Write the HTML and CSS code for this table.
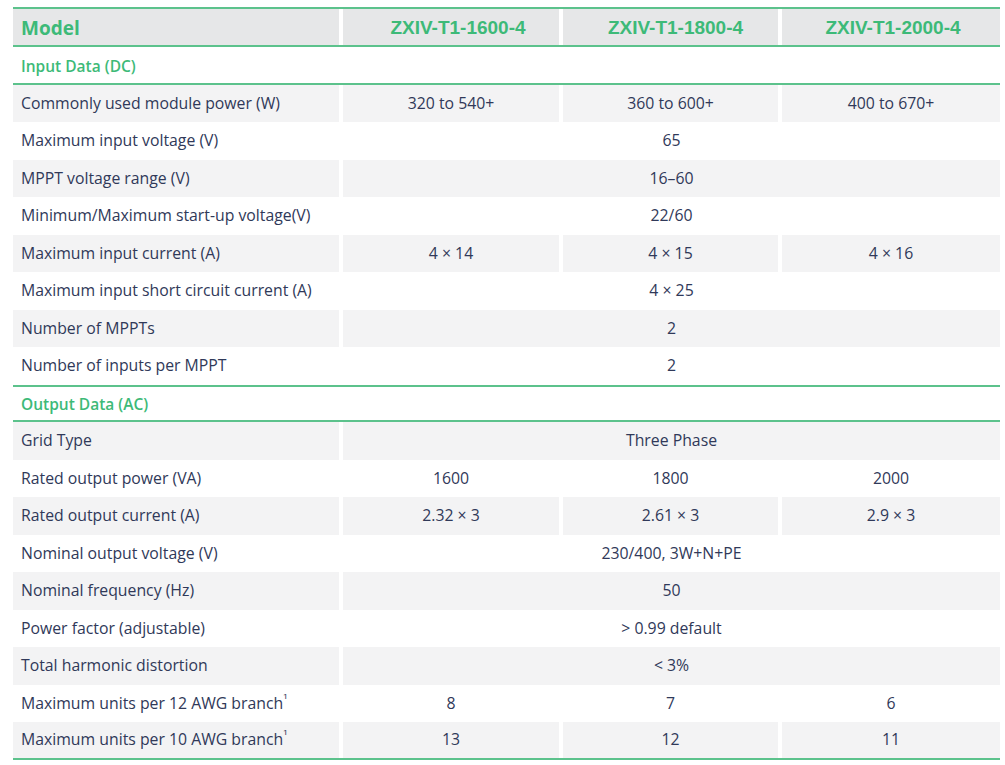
FILE: index.html
```html
<!DOCTYPE html>
<html>
<head>
<meta charset="utf-8">
<link rel="stylesheet" href="styles.css">
</head>
<body>
<div class="spec">
  <div class="row head">
    <div class="cell label model">Model</div>
    <div class="cell val c1">ZXIV-T1-1600-4</div>
    <div class="cell val c2">ZXIV-T1-1800-4</div>
    <div class="cell val c3">ZXIV-T1-2000-4</div>
  </div>

  <div class="row section"><div class="cell label">Input Data (DC)</div></div>

  <div class="row alt">
    <div class="cell label">Commonly used module power (W)</div>
    <div class="cell val">320 to 540+</div>
    <div class="cell val">360 to 600+</div>
    <div class="cell val">400 to 670+</div>
  </div>
  <div class="row">
    <div class="cell label">Maximum input voltage (V)</div>
    <div class="cell val span">65</div>
  </div>
  <div class="row alt">
    <div class="cell label">MPPT voltage range (V)</div>
    <div class="cell val span">16–60</div>
  </div>
  <div class="row">
    <div class="cell label">Minimum/Maximum start-up voltage(V)</div>
    <div class="cell val span">22/60</div>
  </div>
  <div class="row alt">
    <div class="cell label">Maximum input current (A)</div>
    <div class="cell val">4 × 14</div>
    <div class="cell val">4 × 15</div>
    <div class="cell val">4 × 16</div>
  </div>
  <div class="row">
    <div class="cell label">Maximum input short circuit current (A)</div>
    <div class="cell val span">4 × 25</div>
  </div>
  <div class="row alt">
    <div class="cell label">Number of MPPTs</div>
    <div class="cell val span">2</div>
  </div>
  <div class="row">
    <div class="cell label">Number of inputs per MPPT</div>
    <div class="cell val span">2</div>
  </div>

  <div class="row section top"><div class="cell label">Output Data (AC)</div></div>

  <div class="row alt">
    <div class="cell label">Grid Type</div>
    <div class="cell val span">Three Phase</div>
  </div>
  <div class="row">
    <div class="cell label">Rated output power (VA)</div>
    <div class="cell val">1600</div>
    <div class="cell val">1800</div>
    <div class="cell val">2000</div>
  </div>
  <div class="row alt">
    <div class="cell label">Rated output current (A)</div>
    <div class="cell val">2.32 × 3</div>
    <div class="cell val">2.61 × 3</div>
    <div class="cell val">2.9 × 3</div>
  </div>
  <div class="row">
    <div class="cell label">Nominal output voltage (V)</div>
    <div class="cell val span">230/400, 3W+N+PE</div>
  </div>
  <div class="row alt">
    <div class="cell label">Nominal frequency (Hz)</div>
    <div class="cell val span">50</div>
  </div>
  <div class="row">
    <div class="cell label">Power factor (adjustable)</div>
    <div class="cell val span">&gt; 0.99 default</div>
  </div>
  <div class="row alt">
    <div class="cell label">Total harmonic distortion</div>
    <div class="cell val span">&lt; 3%</div>
  </div>
  <div class="row">
    <div class="cell label">Maximum units per 12 AWG branch<span class="sup">¹</span></div>
    <div class="cell val">8</div>
    <div class="cell val">7</div>
    <div class="cell val">6</div>
  </div>
  <div class="row alt last">
    <div class="cell label">Maximum units per 10 AWG branch<span class="sup">¹</span></div>
    <div class="cell val">13</div>
    <div class="cell val">12</div>
    <div class="cell val">11</div>
  </div>
</div>
</body>
</html>
```

FILE: styles.css
```css
html, body {
  margin: 0;
  padding: 0;
  background: #ffffff;
}

body {
  font-family: "Open Sans", "Noto Sans", sans-serif;
  color: #303959;
}

.spec {
  width: 987px;
  margin: 7px 0 0 13px;
  display: flex;
  flex-direction: column;
}

.row {
  display: grid;
  grid-template-columns: 326px 216px 215px 218px;
  column-gap: 4px;
  height: 37.5px;
  box-sizing: border-box;
}

.cell {
  display: flex;
  align-items: center;
  font-size: 15.8px;
  line-height: 1;
  padding-top: 1px;
}

.label {
  padding-left: 8px;
}

.val {
  justify-content: center;
}

.span {
  grid-column: 2 / 5;
}

.alt .cell {
  background: #f3f3f4;
}

.head {
  height: 40px;
  border-top: 2px solid #5cc28c;
  border-bottom: 2px solid #5cc28c;
}

.head .cell {
  background: #e6e7e8;
  color: #3dba78;
  padding-top: 0;
}

.head .model {
  font-weight: 700;
  font-size: 19px;
  padding-top: 2px;
}

.head .val {
  font-family: "Liberation Sans", Arial, sans-serif;
  font-weight: 700;
  font-size: 19px;
}

.head .c1 { padding-left: 14px; }
.head .c2 { padding-left: 10px; }
.head .c3 { padding-left: 4px; }

.section {
  border-bottom: 2px solid #5cc28c;
}

.section.top {
  border-top: 2px solid #5cc28c;
}

.section .cell {
  grid-column: 1 / 5;
  color: #3dba78;
  font-weight: 600;
  font-size: 15.5px;
  padding-top: 3px;
}

.last {
  border-bottom: 2px solid #5cc28c;
}

.sup {
  font-size: 12px;
  position: relative;
  top: -4px;
  margin-left: 0;
}
```
